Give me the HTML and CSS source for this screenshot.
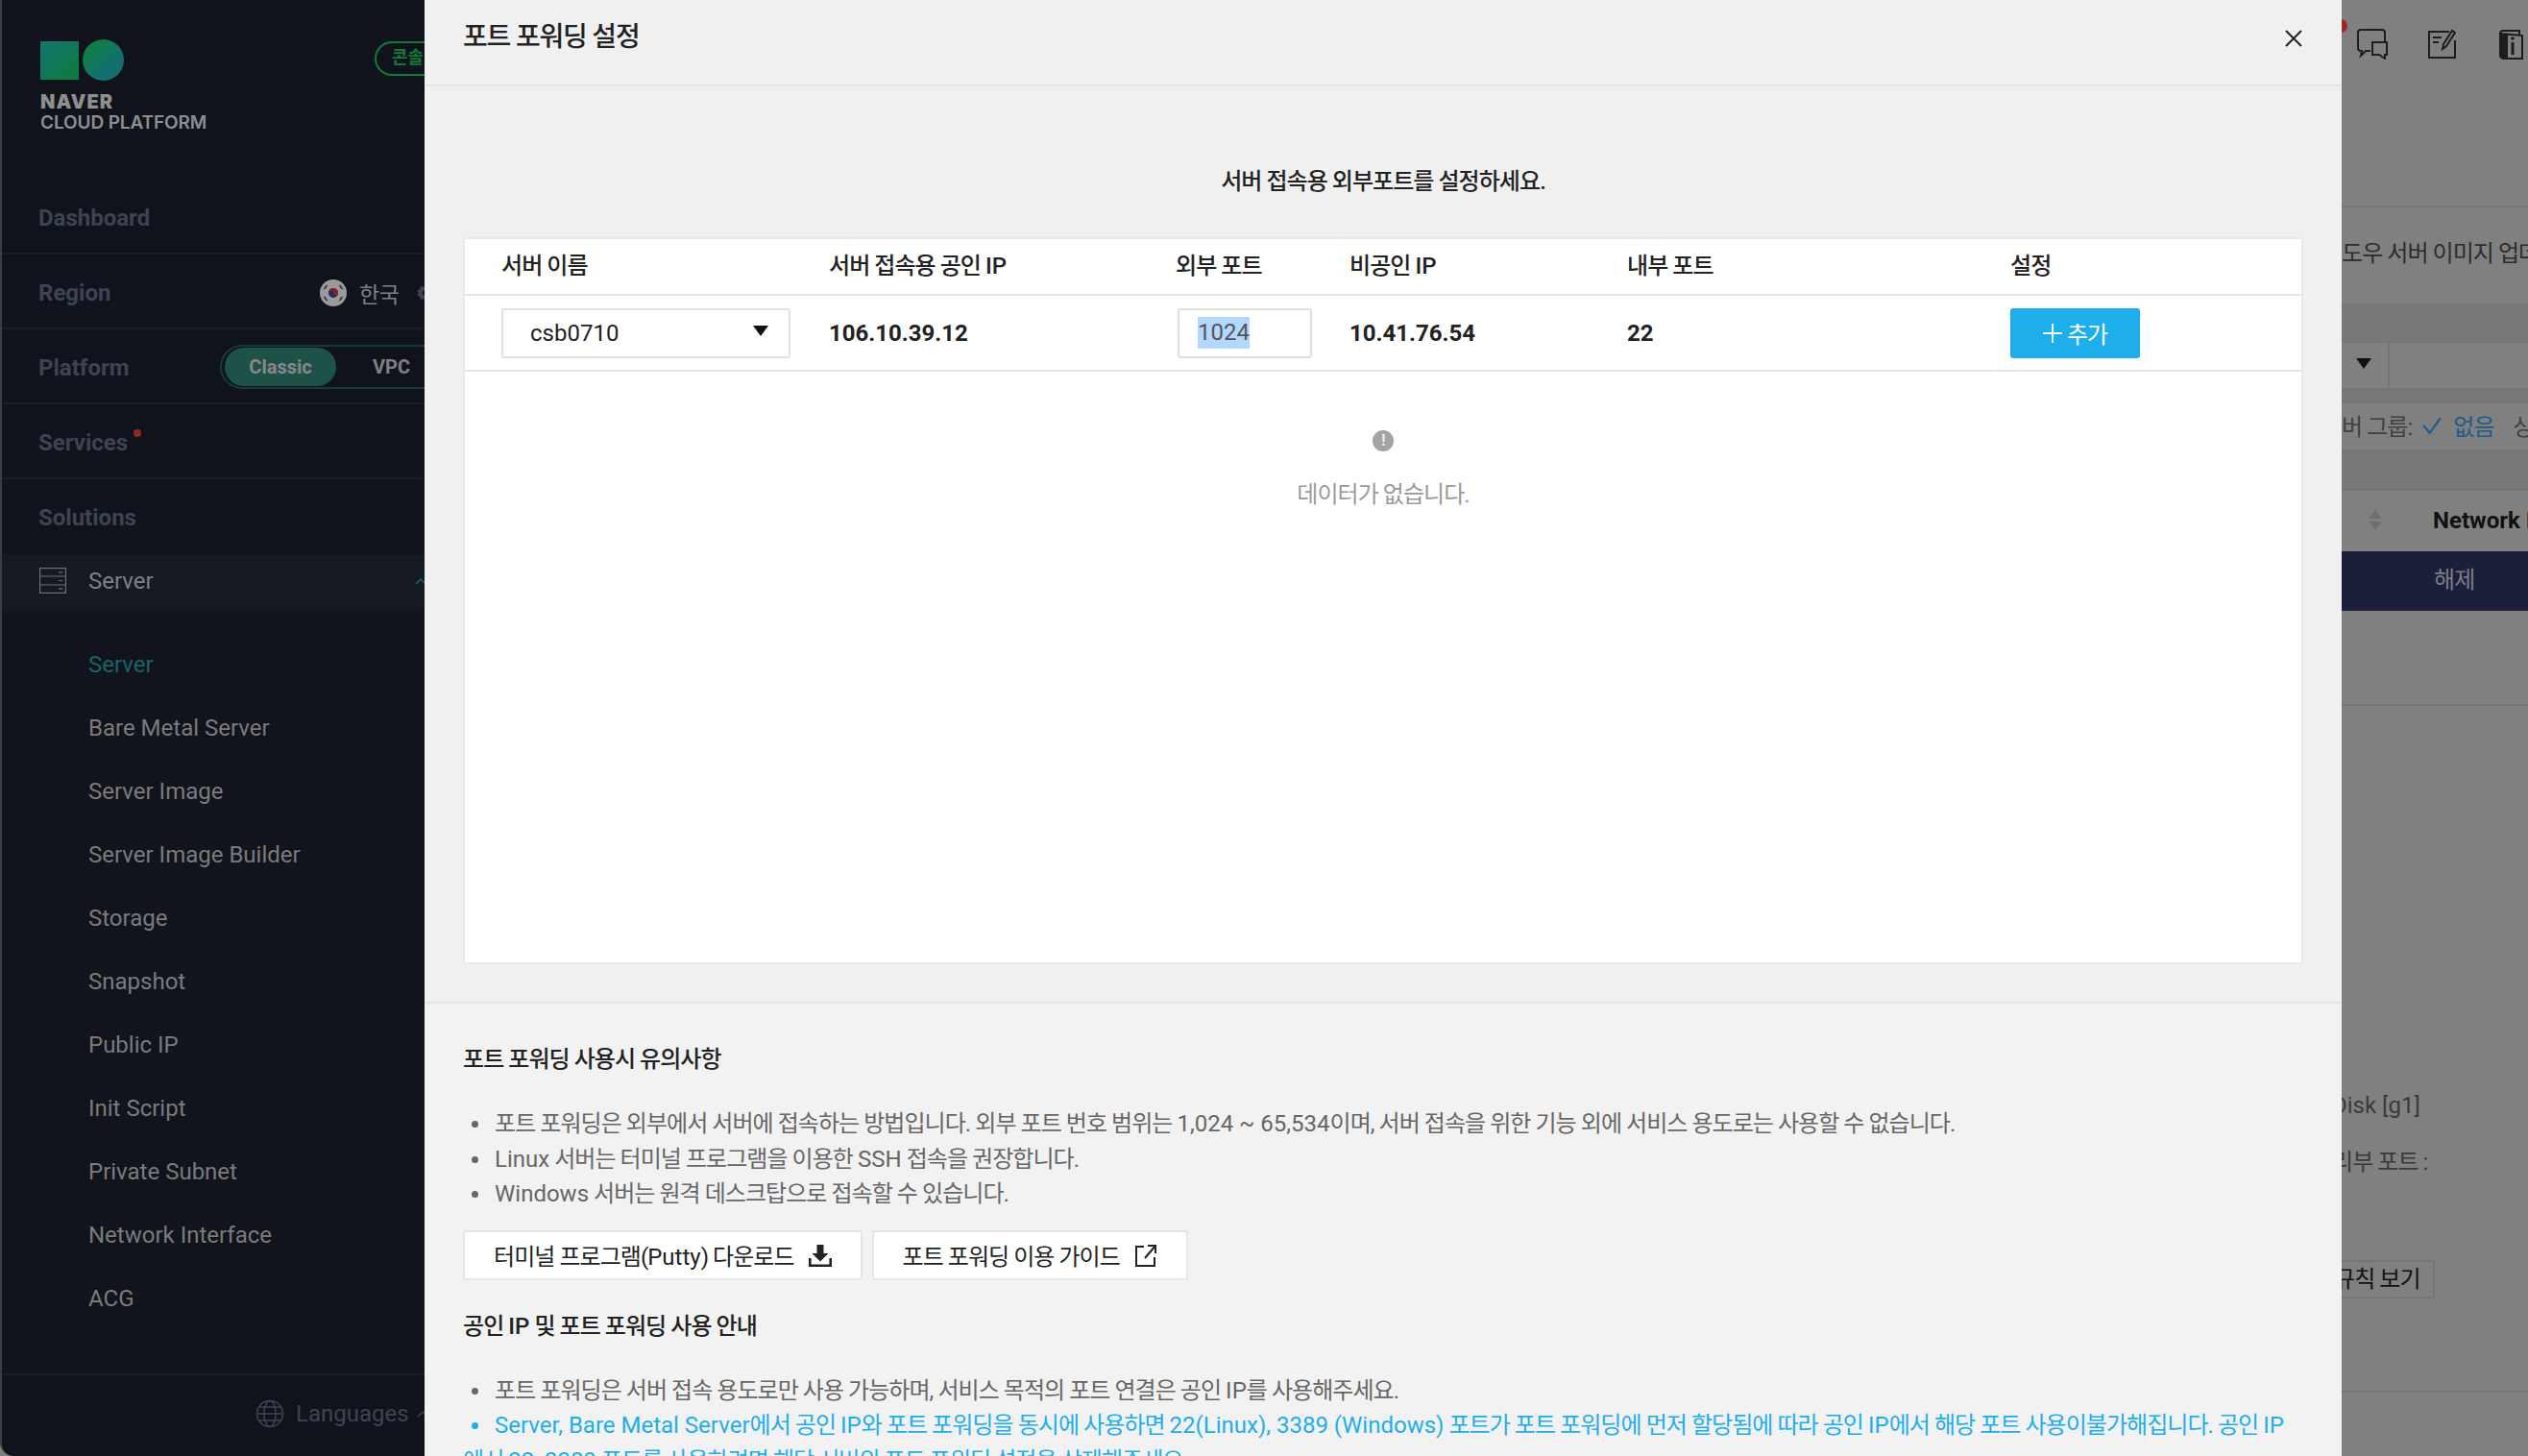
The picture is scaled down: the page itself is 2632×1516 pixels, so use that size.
FILE: index.html
```html
<!DOCTYPE html>
<html lang="ko">
<head>
    <meta charset="UTF-8">
    <title>포트 포워딩 설정</title>
    <link rel="stylesheet" href="styles.css">
</head>
<body>
    <!-- Sidebar -->
    <aside class="sidebar">
        <div class="logo">
            <div class="logo-mark">
                <span class="logo-square"></span>
                <span class="logo-circle"></span>
            </div>
            <div class="logo-name">NAVER</div>
            <div class="logo-sub">CLOUD PLATFORM</div>
            <span class="console-badge">콘솔</span>
        </div>
        <div class="side-row"><span class="side-title">Dashboard</span></div>
        <div class="side-row">
            <span class="side-title">Region</span>
            <span class="region">
                <svg class="flag" viewBox="0 0 28 28">
                    <circle cx="14" cy="14" r="14" fill="#9a9a9a"/>
                    <circle cx="14" cy="14" r="5" fill="#1c2a6b"/>
                    <path d="M9 14a5 5 0 0 1 10 0a2.5 2.5 0 0 1-5 0a2.5 2.5 0 0 0-5 0z" fill="#8f1f26"/>
                    <path d="M5 8l3-2M4 10l3-2M20 6l3 2M21 8l3 2M5 20l3 2M4 18l3 2M20 22l3-2M21 20l3-2" stroke="#333" stroke-width="1.2"/>
                </svg>
                <span class="region-name">한국</span>
                <svg class="gear" viewBox="0 0 20 20"><path d="M10 1l2 3 3-1 1 3 3 2-2 2 2 2-3 2-1 3-3-1-2 3-2-3-3 1-1-3-3-2 2-2-2-2 3-2 1-3 3 1z" fill="#3c4453"/><circle cx="10" cy="10" r="3" fill="#0f1119"/></svg>
            </span>
        </div>
        <div class="side-row">
            <span class="side-title">Platform</span>
            <span class="platform-switch">
                <span class="platform-on">Classic</span>
                <span class="platform-off">VPC</span>
            </span>
        </div>
        <div class="side-row"><span class="side-title">Services<i class="red-dot"></i></span></div>
        <div class="side-row side-row-last"><span class="side-title">Solutions</span></div>
        <div class="side-active">
            <svg class="server-icon" viewBox="0 0 28 27" fill="none" stroke="#6f6f6f" stroke-width="1.2">
                <rect x="0.6" y="0.6" width="26.8" height="25.8"/>
                <path d="M0.6 9h26.8M0.6 18h26.8M20 4.8h4M20 13.5h4M20 22.2h4"/>
            </svg>
            <span>Server</span>
            <svg class="chevron-up" viewBox="0 0 12 8" fill="none" stroke="#176467" stroke-width="1.5"><path d="M1 7l5-5 5 5"/></svg>
        </div>
        <ul class="side-menu">
            <li class="current">Server</li>
            <li>Bare Metal Server</li>
            <li>Server Image</li>
            <li>Server Image Builder</li>
            <li>Storage</li>
            <li>Snapshot</li>
            <li>Public IP</li>
            <li>Init Script</li>
            <li>Private Subnet</li>
            <li>Network Interface</li>
            <li>ACG</li>
        </ul>
        <div class="side-footer">
            <svg class="globe" viewBox="0 0 30 30" fill="none" stroke="#3c4453" stroke-width="1.6">
                <circle cx="15" cy="15" r="13.5"/>
                <ellipse cx="15" cy="15" rx="6" ry="13.5"/>
                <path d="M1.5 15h27M3.5 8h23M3.5 22h23"/>
            </svg>
            <span>Languages</span>
            <svg class="chevron-up chevron-dim" viewBox="0 0 12 8" fill="none" stroke="#3c4453" stroke-width="1.5"><path d="M1 7l5-5 5 5"/></svg>
        </div>
    </aside>

    <!-- Modal -->
    <main class="modal">
        <header class="modal-header">
            <h2>포트 포워딩 설정</h2>
            <svg class="close" viewBox="0 0 20 20" fill="none" stroke="#222" stroke-width="2"><path d="M2 2l16 16M18 2L2 18"/></svg>
        </header>
        <section class="modal-top">
            <p class="lead">서버 접속용 외부포트를 설정하세요.</p>
            <div class="table-card">
                <div class="grid-row head-row">
                    <div>서버 이름</div>
                    <div>서버 접속용 공인 <span class="en">IP</span></div>
                    <div>외부 포트</div>
                    <div>비공인 <span class="en">IP</span></div>
                    <div>내부 포트</div>
                    <div>설정</div>
                </div>
                <div class="grid-row data-row">
                    <div class="select-box"><span>csb0710</span><i class="caret"></i></div>
                    <div>106.10.39.12</div>
                    <div class="port-input"><span class="selected">1024</span></div>
                    <div>10.41.76.54</div>
                    <div>22</div>
                    <div><span class="add-btn"><svg viewBox="0 0 20 20" stroke="#fff" stroke-width="2"><path d="M10 0v20M0 10h20"/></svg>추가</span></div>
                </div>
                <div class="empty">
                    <span class="empty-icon">!</span>
                    <p>데이터가 없습니다.</p>
                </div>
            </div>
        </section>
        <section class="modal-bottom">
            <h3>포트 포워딩 사용시 유의사항</h3>
            <ul class="notes">
                <li>포트 포워딩은 외부에서 서버에 접속하는 방법입니다. 외부 포트 번호 범위는 <span class="en">1,024 ~ 65,534</span>이며, 서버 접속을 위한 기능 외에 서비스 용도로는 사용할 수 없습니다.</li>
                <li><span class="en">Linux</span> 서버는 터미널 프로그램을 이용한 <span class="en">SSH</span> 접속을 권장합니다.</li>
                <li><span class="en">Windows</span> 서버는 원격 데스크탑으로 접속할 수 있습니다.</li>
            </ul>
            <div class="link-btns">
                <span class="link-btn">
                    <span>터미널 프로그램(<span class="en">Putty</span>) 다운로드</span>
                    <svg viewBox="0 0 24 24" fill="#222"><path d="M8.5 1h7v9h5L12 18.5 3.500 10h5z"/><path d="M0 15h2.600v6.400h18.800V15H24v9H0z"/></svg>
                </span>
                <span class="link-btn">
                    <span>포트 포워딩 이용 가이드</span>
                    <svg viewBox="0 0 24 24" fill="none" stroke="#222" stroke-width="2"><path d="M10 3H2v20h19v-9M14 2h8v8M22 2L11 15"/></svg>
                </span>
            </div>
            <h3 class="second">공인 <span class="en">IP</span> 및 포트 포워딩 사용 안내</h3>
            <ul class="notes">
                <li>포트 포워딩은 서버 접속 용도로만 사용 가능하며, 서비스 목적의 포트 연결은 공인 <span class="en">IP</span>를 사용해주세요.</li>
                <li class="blue"><span class="en">Server, Bare Metal Server</span>에서 공인 <span class="en">IP</span>와 포트 포워딩을 동시에 사용하면 <span class="en">22(Linux), 3389 (Windows)</span> 포트가 포트 포워딩에 먼저 할당됨에 따라 공인 <span class="en">IP</span>에서 해당 포트 사용이불가해집니다. 공인 <span class="en">IP</span><br>에서 <span class="en">22, 3389</span> 포트를 사용하려면 해당 서버의 포트 포워딩 설정을 삭제해주세요.</li>
            </ul>
        </section>
    </main>

    <!-- Page behind the modal -->
    <div class="behind">
        <div class="top-icons">
            <i class="alert-dot"></i>
            <svg viewBox="0 0 32 32" fill="none" stroke="#1d1d1d" stroke-width="2"><path d="M14 23H9l-5 5 1-5H4a3 3 0 0 1-3-3V4a3 3 0 0 1 3-3h22a3 3 0 0 1 3 3v9"/><path d="M16 14h15v13h-2v4l-6-4h-7z"/></svg>
            <svg viewBox="0 0 32 32" fill="none" stroke="#1d1d1d" stroke-width="2"><path d="M23 3H2v27h27V12M6 9h9M6 14h6"/><path d="M16 21l1-5L26 2l3 2-9 14z"/></svg>
            <svg viewBox="0 0 32 32" fill="none" stroke="#1d1d1d" stroke-width="2"><path d="M3 5a3 3 0 0 1 3-3h17v4M26 7v24H7a4 4 0 0 1-4-4V5z"/><path d="M3 5v22a4 4 0 0 0 4 4h3V7H6a3 3 0 0 1-3-2z" fill="#1d1d1d"/><path d="M16 14v13" stroke-width="3"/><circle cx="16" cy="10" r="1.800" fill="#1d1d1d" stroke="none"/></svg>
        </div>
        <div class="notice">도우 서버 이미지 업데이트</div>
        <div class="band band-a"></div>
        <div class="filter-row"><i class="caret"></i><span class="filter-cell"></span></div>
        <div class="band band-b"></div>
        <div class="group-row">버 그룹:
            <svg viewBox="0 0 20 20" fill="none" stroke="#1d5c86" stroke-width="2"><path d="M2 10l6 7L18 3"/></svg>
            <span class="group-val">없음</span><span class="group-more">상태</span>
        </div>
        <div class="band band-a"></div>
        <div class="list-head">
            <span class="sort"><i class="sort-up"></i><i class="sort-down"></i></span>
            <span class="list-name">Network Interface</span>
        </div>
        <div class="navy-row"><span>해제</span></div>
        <div class="blank-row"></div>
        <div class="detail">
            <p class="disk">Disk [g1]</p>
            <p class="port-label">리부 포트 :</p>
            <span class="rule-btn">규칙 보기</span>
        </div>
    </div>
</body>
</html>
```

FILE: styles.css
```css
* {
    margin: 0;
    padding: 0;
    box-sizing: border-box;
}

html, body {
    width: 2632px;
    height: 1516px;
    overflow: hidden;
}

body {
    display: flex;
    font-family: Roboto, "Noto Sans CJK KR", sans-serif;
    font-size: 24px;
    background: #808080;
    color: #222;
}

/* Latin runs inside tightened Korean text */
.en {
    letter-spacing: 0;
}

/* Sidebar */
.sidebar {
    width: 442px;
    height: 1516px;
    flex: none;
    display: flex;
    flex-direction: column;
    background: #10131b;
    border-left: 2px solid #3b3d42;
    border-bottom-left-radius: 14px;
    overflow: hidden;
}

.logo {
    height: 187px;
    padding: 41px 0 0 40px;
    position: relative;
}

.logo-mark {
    display: flex;
    gap: 4px;
    align-items: center;
    height: 43px;
}

.logo-square {
    width: 40px;
    height: 40px;
    background: linear-gradient(135deg, #15756f, #0b7c3c);
}

.logo-circle {
    width: 43px;
    height: 43px;
    border-radius: 50%;
    background: linear-gradient(135deg, #0e7f43 20%, #12706f 65%);
}

.logo-name,
.logo-sub {
    font-family: Inter, sans-serif;
    font-size: 19px;
    line-height: 21px;
    color: #8f8f8f;
}

.logo-name {
    margin-top: 12px;
    font-weight: 900;
    font-size: 20px;
    letter-spacing: 1px;
}

.logo-sub {
    font-weight: 600;
    white-space: nowrap;
    letter-spacing: -0.1px;
}

.console-badge {
    position: absolute;
    left: 388px;
    top: 43px;
    width: 70px;
    height: 36px;
    border: 2px solid #0f7a3a;
    border-radius: 18px;
    padding-left: 16px;
    font-size: 18px;
    font-weight: 700;
    line-height: 30px;
    color: #0f7a3a;
}

.side-row {
    height: 78px;
    flex: none;
    display: flex;
    align-items: center;
    padding: 3px 0 0 38px;
    border-bottom: 2px solid #181d26;
    position: relative;
}

.side-row-last {
    border-bottom: 0;
    padding-top: 1px;
}

.side-title {
    font-size: 24px;
    font-weight: 700;
    color: #3c4453;
    position: relative;
}

.red-dot {
    position: absolute;
    right: -14px;
    top: 0;
    width: 8px;
    height: 8px;
    border-radius: 50%;
    background: #92281f;
}

.region {
    margin-left: auto;
    display: flex;
    align-items: center;
    white-space: nowrap;
    width: 109px;
}

.flag {
    width: 28px;
    height: 28px;
    flex: none;
}

.region-name {
    margin-left: 13px;
    color: #808080;
    font-size: 23px;
    letter-spacing: -0.5px;
}

.gear {
    width: 20px;
    height: 20px;
    flex: none;
    margin-left: 18px;
}

.platform-switch {
    position: absolute;
    left: 227px;
    top: 16px;
    width: 240px;
    height: 46px;
    display: flex;
    align-items: center;
    padding-left: 3px;
    border: 2px solid #173a38;
    border-radius: 23px;
    font-size: 20px;
    font-weight: 700;
}

.platform-on {
    width: 116px;
    height: 40px;
    border-radius: 20px;
    background: #1e5248;
    color: #878787;
    text-align: center;
    line-height: 40px;
}

.platform-off {
    margin-left: 38px;
    color: #808080;
}

.side-active {
    height: 58px;
    flex: none;
    display: flex;
    align-items: center;
    padding: 0 0 3px 39px;
    background: #151921;
    color: #808080;
    position: relative;
}

.server-icon {
    width: 28px;
    height: 27px;
    margin-right: 23px;
}

.chevron-up {
    position: absolute;
    left: 430px;
    top: 24px;
    width: 12px;
    height: 8px;
}

.side-menu {
    list-style: none;
    padding-top: 24px;
    flex: 1;
    background: #11141c;
}

.side-menu li {
    height: 66px;
    padding-left: 90px;
    line-height: 66px;
    color: #7b7b7b;
}

.side-menu .current {
    color: #176467;
}

.side-footer {
    height: 86px;
    flex: none;
    display: flex;
    align-items: center;
    padding: 0 0 4px 264px;
    border-top: 2px solid #181d26;
    color: #3c4453;
    position: relative;
}

.globe {
    width: 30px;
    height: 30px;
    margin-right: 12px;
}

.chevron-dim {
    left: 432px;
    top: 36px;
}

/* Modal */
.modal {
    width: 1996px;
    height: 1516px;
    flex: none;
    display: flex;
    flex-direction: column;
    background: #f0f0f0;
    overflow: hidden;
    letter-spacing: -0.95px;
}

.modal-header {
    height: 90px;
    flex: none;
    display: flex;
    justify-content: space-between;
    padding: 21px 40px 0 40px;
    border-bottom: 2px solid #e4e4e4;
}

.modal-header h2 {
    font-size: 28px;
    font-weight: 500;
    line-height: 36px;
    letter-spacing: -1.2px;
}

.close {
    width: 20px;
    height: 20px;
    margin-top: 9px;
}

.modal-top {
    height: 955px;
    flex: none;
    padding: 0 40px;
    border-bottom: 2px solid #e4e4e4;
}

.lead {
    padding-top: 81px;
    height: 157px;
    text-align: center;
    font-weight: 500;
    line-height: 36px;
}

.table-card {
    height: 757px;
    background: #fff;
    border: 2px solid #e8e8e8;
    border-radius: 3px;
}

.grid-row {
    display: grid;
    grid-template-columns: 341px 361px 181px 289px 399px 1fr;
    align-items: center;
    padding-left: 38px;
    border-bottom: 2px solid #e4e4e4;
    font-weight: 500;
}

.head-row {
    height: 59px;
    padding-bottom: 6px;
}

.data-row {
    height: 79px;
    font-weight: 700;
    letter-spacing: 0;
}

.select-box {
    width: 301px;
    height: 52px;
    display: flex;
    justify-content: space-between;
    align-items: center;
    padding: 0 21px 0 28px;
    border: 2px solid #e2e2e2;
    border-radius: 3px;
    font-weight: 400;
}

.caret {
    width: 0;
    height: 0;
    margin-top: -4px;
    border-left: 8px solid transparent;
    border-right: 8px solid transparent;
    border-top: 11px solid #111;
}

.port-input {
    width: 140px;
    height: 52px;
    margin-left: 2px;
    display: flex;
    align-items: center;
    padding-left: 19px;
    border: 2px solid #dedede;
    border-radius: 3px;
    font-weight: 400;
    color: #555;
}

.selected {
    background: #b3d7ff;
    line-height: 33px;
}

.add-btn {
    width: 135px;
    height: 52px;
    display: flex;
    align-items: center;
    justify-content: center;
    gap: 5px;
    border-radius: 3px;
    background: #1eaeec;
    color: #fff;
    font-size: 24px;
    font-weight: 400;
    letter-spacing: -1px;
}

.add-btn svg {
    width: 20px;
    height: 20px;
}

.empty {
    padding-top: 55px;
    text-align: center;
    color: #9a9a9a;
}

.empty-icon {
    display: inline-block;
    width: 22px;
    height: 22px;
    border-radius: 50%;
    background: #a3a3a3;
    color: #f0f0f0;
    font-size: 16px;
    font-weight: 700;
    line-height: 22px;
}

.empty p {
    margin-top: 27px;
    line-height: 36px;
}

.modal-bottom {
    flex: 1;
    padding: 40px 30px 0 40px;
    background: #f2f2f2;
}

.modal-bottom h3 {
    font-size: 24px;
    font-weight: 500;
    line-height: 36px;
    color: #222;
}

.notes {
    list-style: none;
    margin-top: 31px;
    color: #666;
    line-height: 36.5px;
}

.notes li {
    position: relative;
    text-indent: 33px;
}

.notes li::before {
    content: "";
    position: absolute;
    left: 9px;
    top: 15px;
    width: 7px;
    height: 7px;
    border-radius: 50%;
    background: #666;
}

.notes .blue {
    color: #1eaeec;
}

.notes .blue::before {
    background: #1eaeec;
}

.link-btns {
    display: flex;
    gap: 10px;
    margin-top: 19px;
}

.link-btn {
    height: 52px;
    display: flex;
    align-items: center;
    gap: 15px;
    padding: 0 30px;
    background: #fff;
    border: 2px solid #e6e6e6;
    border-radius: 2px;
    font-weight: 400;
    color: #222;
}

.link-btn svg {
    width: 24px;
    height: 24px;
}

.modal-bottom .second {
    margin-top: 30px;
}

/* Page behind the modal */
.behind {
    flex: 1;
    min-width: 0;
    overflow: hidden;
    display: flex;
    flex-direction: column;
    white-space: nowrap;
    color: #3a3a3a;
    letter-spacing: -0.95px;
}

.top-icons {
    height: 216px;
    flex: none;
    display: flex;
    gap: 41px;
    padding: 30px 0 0 16px;
    border-bottom: 2px solid #757575;
    position: relative;
}

.top-icons svg {
    width: 32px;
    height: 32px;
    flex: none;
}

.alert-dot {
    position: absolute;
    left: -8px;
    top: 20px;
    width: 14px;
    height: 14px;
    border-radius: 50%;
    background: #a5261f;
}

.notice {
    height: 100px;
    flex: none;
    padding-top: 30px;
    line-height: 36px;
    color: #2c2c2c;
}

.band {
    flex: none;
    background: #787878;
    border-bottom: 2px solid #747474;
}

.band-a {
    height: 41px;
}

.band-b {
    height: 14px;
}

.filter-row {
    height: 49px;
    flex: none;
    display: flex;
    align-items: center;
    padding-left: 15px;
    border-bottom: 2px solid #747474;
}

.filter-cell {
    height: 100%;
    margin-left: 17px;
    border-left: 2px solid #747474;
}

.group-row {
    height: 50px;
    flex: none;
    display: flex;
    align-items: center;
    padding-bottom: 3px;
    color: #404040;
    border-bottom: 2px solid #747474;
}

.group-row svg {
    width: 24px;
    height: 22px;
    flex: none;
    margin-left: 9px;
}

.group-val {
    margin-left: 10px;
    color: #1d5c86;
}

.group-more {
    margin-left: 20px;
}

.list-head {
    height: 63px;
    flex: none;
    display: flex;
    align-items: center;
    padding: 0 0 2px 28px;
}

.sort {
    display: flex;
    flex-direction: column;
    gap: 3px;
}

.sort-up,
.sort-down {
    width: 0;
    height: 0;
    border-left: 7px solid transparent;
    border-right: 7px solid transparent;
}

.sort-up {
    border-bottom: 9px solid #6e6e6e;
}

.sort-down {
    border-top: 9px solid #6e6e6e;
}

.list-name {
    margin-left: 53px;
    font-weight: 700;
    color: #111;
    letter-spacing: 0;
}

.navy-row {
    height: 62px;
    flex: none;
    background: #1b1f3a;
    color: #7d7d86;
    line-height: 60px;
    padding-left: 96px;
}

.blank-row {
    height: 99px;
    flex: none;
    border-bottom: 2px solid #747474;
}

.detail {
    height: 715px;
    flex: none;
    padding-top: 398px;
    border-bottom: 2px solid #747474;
    margin-left: -10px;
    color: #3a3a3a;
}

.disk {
    line-height: 36px;
    letter-spacing: 0;
}

.port-label {
    margin-top: 23px;
    line-height: 36px;
}

.rule-btn {
    display: block;
    width: 107px;
    height: 40px;
    margin-top: 84px;
    padding-right: 17px;
    border: 2px solid #747474;
    border-radius: 3px;
    line-height: 36px;
    color: #111;
    text-align: right;
}
```
